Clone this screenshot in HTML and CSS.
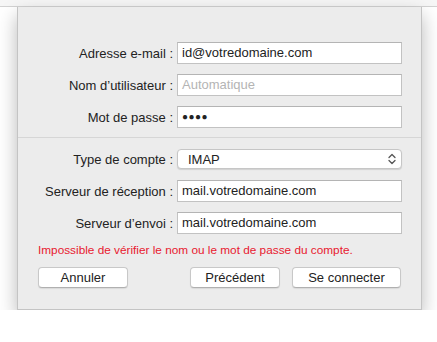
FILE: index.html
```html
<!DOCTYPE html>
<html lang="fr">
<head>
    <meta charset="UTF-8">
    <meta name="viewport" content="width=device-width, initial-scale=1.0">
    <title>Ajouter un compte Mail</title>
    <link rel="stylesheet" href="styles.css">
</head>
<body>
    <div class="toolbar"></div>

    <div class="sheet">
        <div class="fields">
            <label class="label">Adresse e-mail :</label>
            <div class="field">id@votredomaine.com</div>

            <label class="label">Nom d’utilisateur :</label>
            <div class="field placeholder">Automatique</div>

            <label class="label">Mot de passe :</label>
            <div class="field dots">●●●●</div>
        </div>

        <div class="separator"></div>

        <div class="fields">
            <label class="label">Type de compte :</label>
            <div class="select">
                <span>IMAP</span>
                <svg class="chevrons" width="8" height="12" viewBox="0 0 8 12">
                    <path d="M1 4.5 L4 1.5 L7 4.5 M1 7.5 L4 10.5 L7 7.5" fill="none" stroke="#555" stroke-width="1.3" stroke-linecap="round" stroke-linejoin="round"/>
                </svg>
            </div>

            <label class="label">Serveur de réception :</label>
            <div class="field">mail.votredomaine.com</div>

            <label class="label">Serveur d’envoi :</label>
            <div class="field">mail.votredomaine.com</div>
        </div>

        <p class="error">Impossible de vérifier le nom ou le mot de passe du compte.</p>

        <div class="buttons">
            <button class="btn btn-cancel">Annuler</button>
            <div class="right">
                <button class="btn btn-prev">Précédent</button>
                <button class="btn btn-connect">Se connecter</button>
            </div>
        </div>
    </div>
</body>
</html>
```

FILE: styles.css
```css
body {
    font-family: "Liberation Sans", Arial, sans-serif;
    font-size: 13px;
    color: #222;
    background-color: #fff;
    margin: 0;
    padding: 0;
}

.toolbar {
    height: 6px;
    background-color: #f6f6f6;
    border-bottom: 1px solid #d2d2d2;
}

.sheet {
    width: 405px;
    margin-left: 17px;
    box-sizing: border-box;
    padding: 35px 20px 21px;
    background-color: #ececec;
    border: 1px solid #c4c4c4;
    border-top: none;
    box-shadow: 0 8px 18px rgba(0, 0, 0, 0.28);
}

.fields {
    display: grid;
    grid-template-columns: 135px 225px;
    column-gap: 4px;
    row-gap: 10px;
    align-items: center;
}

.label {
    text-align: right;
    white-space: nowrap;
}

.field {
    height: 22px;
    line-height: 20px;
    box-sizing: border-box;
    padding: 0 4px;
    background-color: #fff;
    border: 1px solid #c2c2c2;
    border-top-color: #b4b4b4;
}

.placeholder {
    color: #b4b4b4;
}

.dots {
    font-size: 10px;
    letter-spacing: 0.5px;
    color: #222;
}

.separator {
    height: 1px;
    background-color: #d6d6d6;
    margin: 9px -20px 11px;
}

.select {
    height: 20px;
    box-sizing: border-box;
    display: flex;
    align-items: center;
    justify-content: space-between;
    padding: 0 5px 0 10px;
    background-color: #fff;
    border: 1px solid #c6c6c6;
    border-radius: 4px;
    box-shadow: 0 1px 1px rgba(0, 0, 0, 0.12);
    margin-bottom: 1px;
}

.error {
    color: #e8192f;
    font-size: 11.8px;
    margin: 9px 0 9px;
    line-height: 15px;
}

.buttons {
    display: flex;
    justify-content: space-between;
}

.right {
    display: flex;
    gap: 12px;
}

.btn {
    font-family: "Liberation Sans", Arial, sans-serif;
    font-size: 13px;
    color: #222;
    height: 21px;
    padding: 0;
    background-color: #fff;
    border: 1px solid #c8c8c8;
    border-bottom-color: #b0b0b0;
    border-radius: 4px;
    box-shadow: 0 1px 1px rgba(0, 0, 0, 0.08);
}

.btn-cancel {
    width: 90px;
}

.btn-prev {
    width: 90px;
}

.btn-connect {
    width: 109px;
}
```
